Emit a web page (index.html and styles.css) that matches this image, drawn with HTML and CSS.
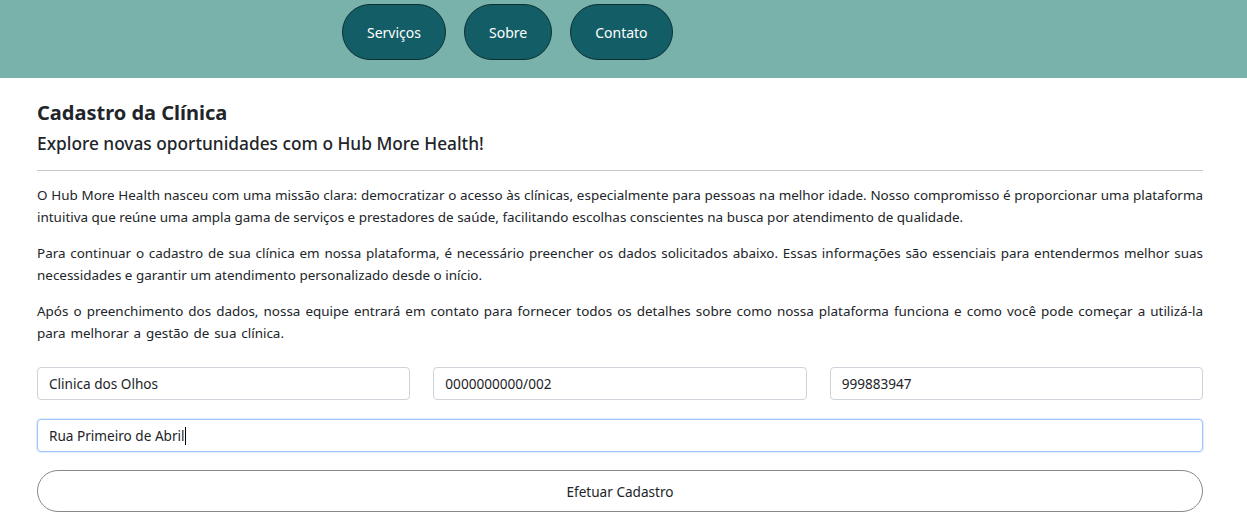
FILE: index.html
```html
<!DOCTYPE html>
<html lang="pt-BR">
<head>
<meta charset="utf-8">
<title>Cadastro da Clínica</title>
<link rel="stylesheet" href="styles.css">
</head>
<body>
<header class="topbar">
  <nav class="nav">
    <a class="nav-btn" href="#">Serviços</a>
    <a class="nav-btn" href="#">Sobre</a>
    <a class="nav-btn" href="#">Contato</a>
  </nav>
</header>
<main class="content">
  <h1 class="title">Cadastro da Clínica</h1>
  <h2 class="subtitle">Explore novas oportunidades com o Hub More Health!</h2>
  <hr class="divider">
  <p class="text">O Hub More Health nasceu com uma missão clara: democratizar o acesso às clínicas, especialmente para pessoas na melhor idade. Nosso compromisso é proporcionar uma plataforma intuitiva que reúne uma ampla gama de serviços e prestadores de saúde, facilitando escolhas conscientes na busca por atendimento de qualidade.</p>
  <p class="text">Para continuar o cadastro de sua clínica em nossa plataforma, é necessário preencher os dados solicitados abaixo. Essas informações são essenciais para entendermos melhor suas necessidades e garantir um atendimento personalizado desde o início.</p>
  <p class="text text-loose">Após o preenchimento dos dados, nossa equipe entrará em contato para fornecer todos os detalhes sobre como nossa plataforma funciona e como você pode começar a utilizá-la para melhorar a gestão de sua clínica.</p>
  <form class="form">
    <div class="row3">
      <input class="field" type="text" value="Clinica dos Olhos">
      <input class="field" type="text" value="0000000000/002">
      <input class="field" type="text" value="999883947">
    </div>
    <div class="field focus"><span>Rua Primeiro de Abril</span><span class="caret"></span></div>
    <button class="submit" type="button">Efetuar Cadastro</button>
  </form>
</main>
</body>
</html>
```
FILE: styles.css
```css
* { box-sizing: border-box; }
body {
  margin: 0;
  font-family: "Segoe UI", "Noto Sans", "Open Sans", sans-serif;
  color: #212529;
  background: #fff;
}
.topbar {
  background: #79b1ab;
  height: 78px;
  padding-top: 4px;
}
.nav {
  display: flex;
  gap: 18px;
  padding-left: 342px;
}
.nav-btn {
  display: flex;
  align-items: center;
  justify-content: center;
  height: 56px;
  padding: 0 24px;
  border-radius: 28px;
  background: #135e66;
  border: 1px solid #0c2f33;
  color: #fff;
  text-decoration: none;
  font-size: 14px;
}
.content {
  padding: 0 44px 0 37px;
}
.title {
  margin: 21px 0 0;
  font-size: 20px;
  font-weight: 700;
  line-height: 28px;
}
.subtitle {
  margin: 5px 0 0;
  font-size: 17.3px;
  font-weight: 500;
  line-height: 24px;
}
.divider {
  margin: 14px 0 0;
  border: 0;
  border-top: 1px solid #c8c8c8;
}
.text {
  margin: 14px 0 0;
  font-size: 13.45px;
  line-height: 21.5px;
  text-align: justify;
}
.text + .text { margin-top: 15px; }
.text-loose { word-spacing: 1.3px; }
.form {
  margin-top: 23px;
  display: flex;
  flex-direction: column;
  gap: 18px;
}
.row3 {
  display: grid;
  grid-template-columns: 1fr 1fr 1fr;
  gap: 23px;
  margin-bottom: 1px;
}
.field {
  height: 33px;
  width: 100%;
  padding: 0 11px;
  border: 1px solid #ced4da;
  border-radius: 4px;
  font-family: inherit;
  font-size: 13.6px;
  color: #212529;
  background: #fff;
  display: flex;
  align-items: center;
}
.focus {
  border-color: #9ec5fe;
  box-shadow: 0 0 0 1px rgba(13,110,253,0.12);
}
.caret {
  display: inline-block;
  width: 1px;
  height: 18px;
  background: #000;
}
.submit {
  height: 42px;
  width: 100%;
  border: 1px solid #888;
  border-radius: 21px;
  background: #fff;
  font-family: inherit;
  font-size: 13.6px;
  color: #212529;
}
```
